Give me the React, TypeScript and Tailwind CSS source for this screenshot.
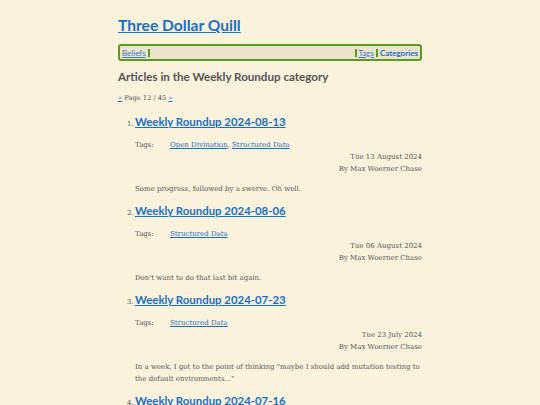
import React from "react";

const articles = [
  {
    title: "Weekly Roundup 2024-08-13",
    tags: ["Open Divination", "Structured Data"],
    date: "Tue 13 August 2024",
    summary: "Some progress, followed by a swerve. Oh well.",
  },
  {
    title: "Weekly Roundup 2024-08-06",
    tags: ["Structured Data"],
    date: "Tue 06 August 2024",
    summary: "Don't want to do that last bit again.",
  },
  {
    title: "Weekly Roundup 2024-07-23",
    tags: ["Structured Data"],
    date: "Tue 23 July 2024",
    summary:
      "In a week, I got to the point of thinking \"maybe I should add mutation testing to the default environments...\"",
  },
  {
    title: "Weekly Roundup 2024-07-16",
    tags: ["Structured Data"],
    date: "Tue 16 July 2024",
    summary: "",
  },
];

const sans = "font-['Lato','Open_Sans',sans-serif]";
const serif = "font-['DejaVu_Serif','Liberation_Serif',serif]";

export default function App() {
  return (
    <div className="h-[405px] overflow-hidden bg-[#fbf2dc] text-[#555]">
      <div className="mx-auto w-[304px] pt-[14px]">
        {/* ===== Site title ===== */}
        <h1 className={`${sans} text-[15.6px] font-bold leading-[22px]`}>
          <a href="#" className="text-[#1a6fc2] underline">
            Three Dollar Quill
          </a>
        </h1>

        {/* ===== Nav bar ===== */}
        <nav
          className={`${sans} mt-[8px] flex h-[17px] items-center rounded-[3px] border-2 border-[#5d9a23] bg-[#ebe3cd] text-[8px] leading-none`}
        >
          <a href="#" className="border-r-2 border-[#5d9a23] px-[2px] text-[#3f7bc0] underline">
            Beliefs
          </a>
          <div className="flex-1" />
          <a href="#" className="border-l-2 border-[#5d9a23] px-[2px] text-[#3f7bc0] underline">
            Tags
          </a>
          <a href="#" className="border-l-2 border-[#5d9a23] px-[2px] font-bold text-[#1a6fc2]">
            Categories
          </a>
        </nav>

        <h2 className={`${sans} mt-[7px] text-[11.6px] font-bold leading-[18px] text-[#555]`}>
          Articles in the Weekly Roundup category
        </h2>

        <p className={`${serif} mt-[7px] text-[6.7px] leading-[10px]`}>
          <a href="#" className="text-[#1a6fc2] underline">«</a> Page 12 / 45{" "}
          <a href="#" className="text-[#1a6fc2] underline">»</a>
        </p>

        {/* ===== Articles ===== */}
        <ol className="mt-[10px] pl-[17px]">
          {articles.map((a, i) => (
            <li key={a.title} className="mb-[7px]">
              <div className="flex items-baseline">
                <span className={`${serif} -ml-[8px] w-[8px] text-[7px]`}>{i + 1}.</span>
                <a href="#" className={`${sans} text-[11.4px] font-bold leading-[18px] text-[#1a6fc2] underline`}>
                  {a.title}
                </a>
              </div>
              <div className={`${serif} mt-[8px] flex text-[7px] leading-[12px]`}>
                <span className="w-[35px]">Tags:</span>
                <span>
                  {a.tags.map((t, j) => (
                    <React.Fragment key={t}>
                      {j > 0 && ", "}
                      <a href="#" className="text-[#1a6fc2] underline">{t}</a>
                    </React.Fragment>
                  ))}
                </span>
              </div>
              <div className={`${serif} text-right text-[7px] leading-[12px]`}>
                <div>{a.date}</div>
                <div>By Max Woerner Chase</div>
              </div>
              {a.summary && (
                <p className={`${serif} mt-[8px] text-[7px] leading-[12px]`}>{a.summary}</p>
              )}
            </li>
          ))}
        </ol>
      </div>
    </div>
  );
}
